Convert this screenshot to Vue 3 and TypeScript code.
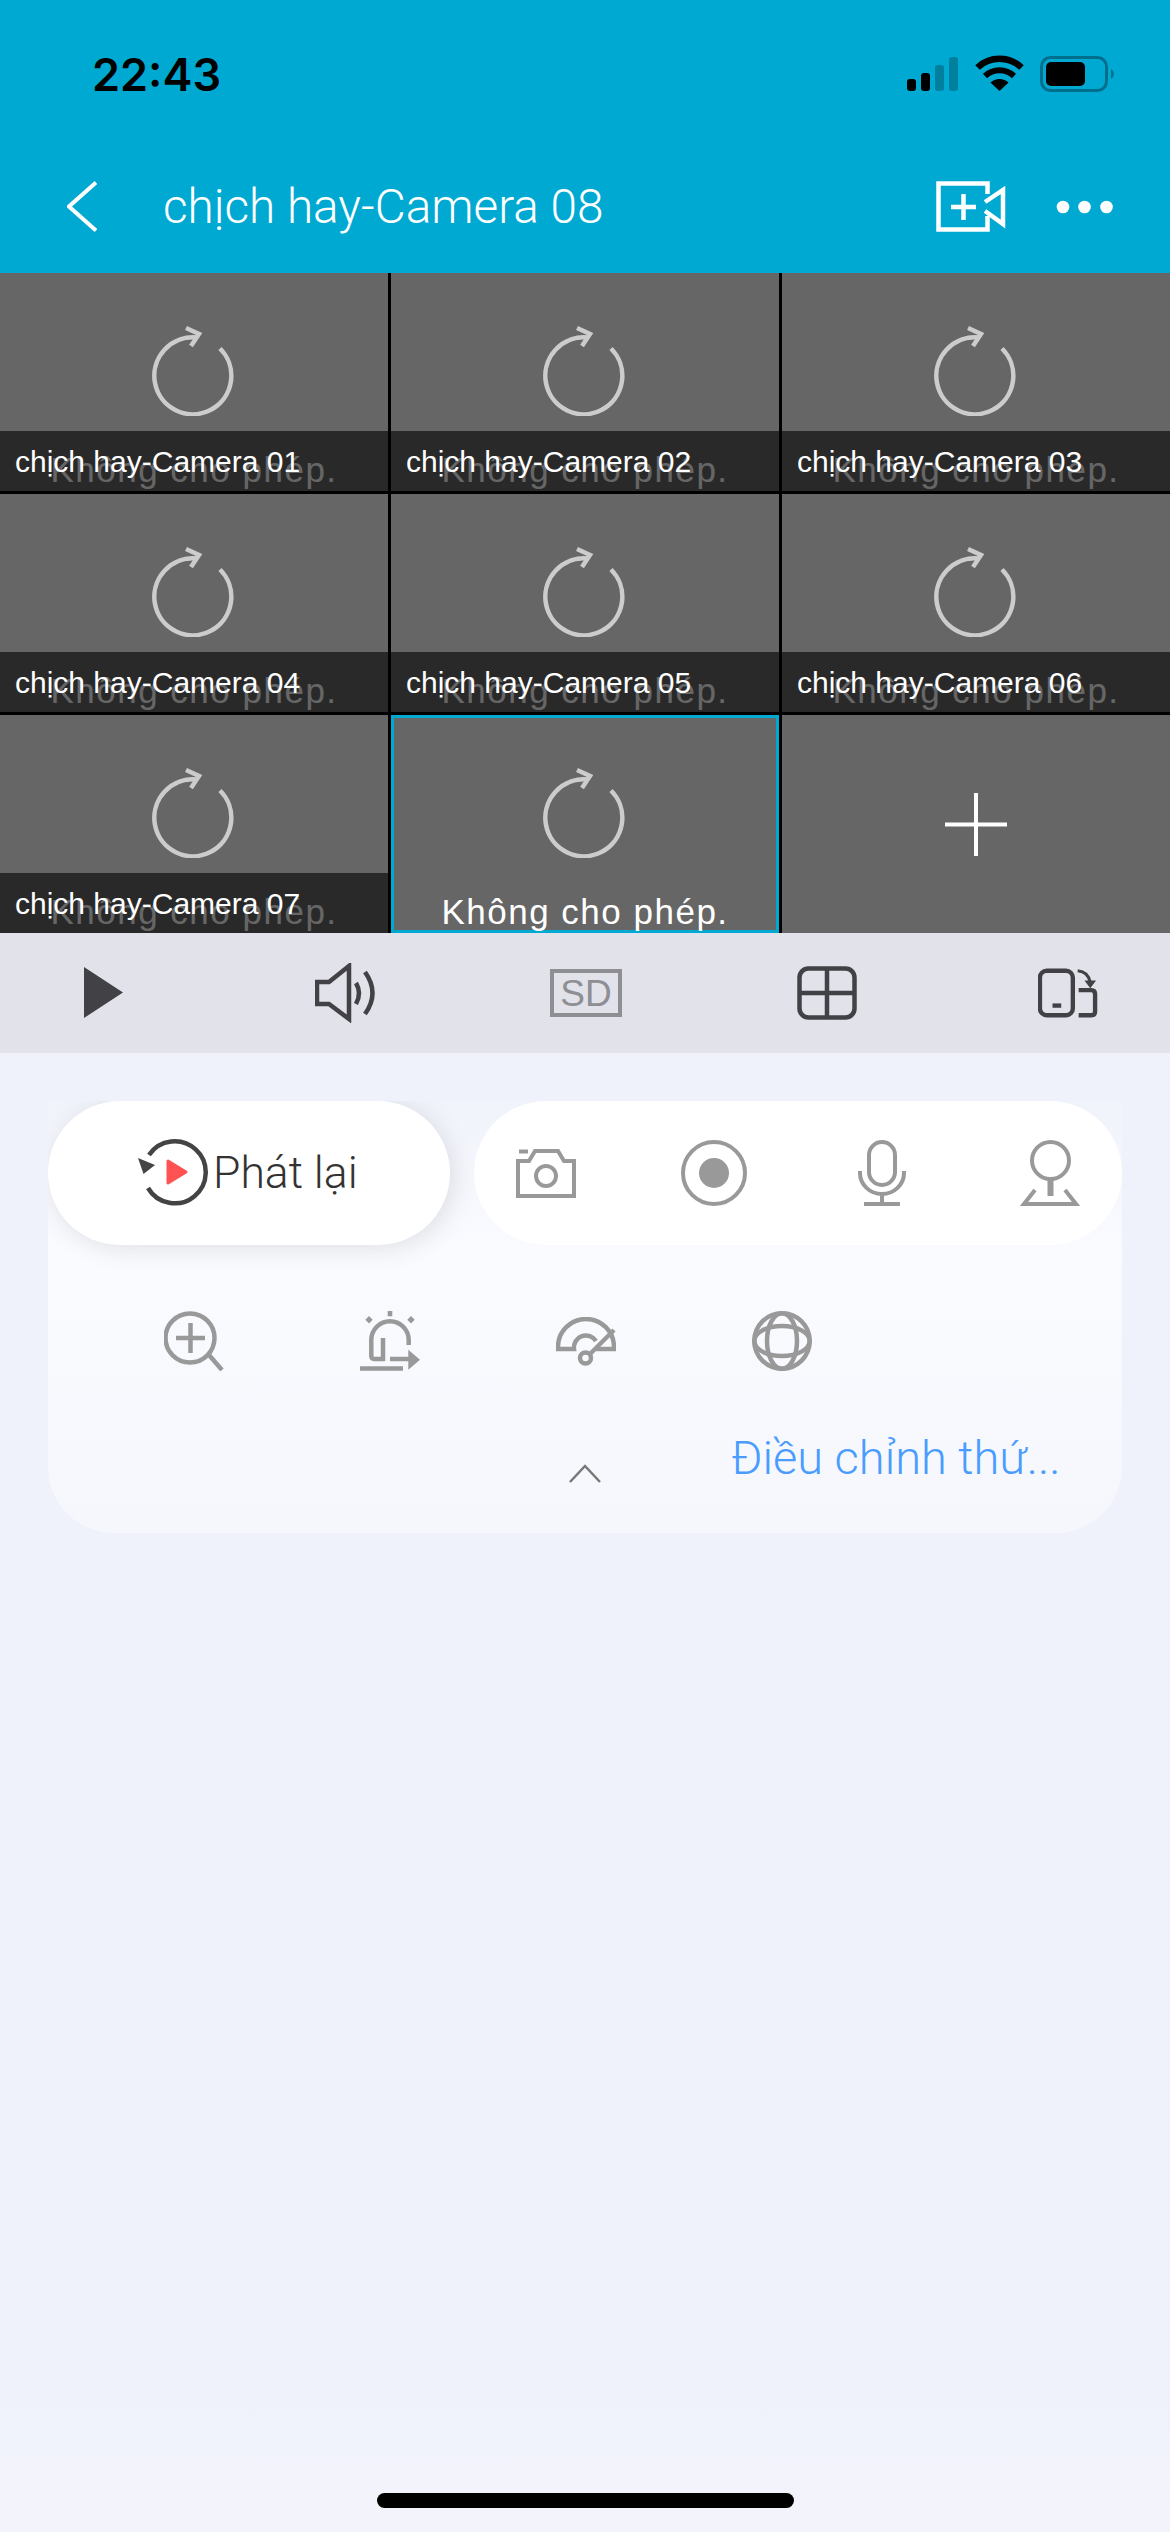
<script setup lang="ts">
const cells = [
  'chịch hay-Camera 01',
  'chịch hay-Camera 02',
  'chịch hay-Camera 03',
  'chịch hay-Camera 04',
  'chịch hay-Camera 05',
  'chịch hay-Camera 06',
  'chịch hay-Camera 07',
]
</script>

<template>
  <div class="page">
    <header class="top">
      <div class="status">
        <span class="time">22:43</span>
        <div class="status-icons">
          <svg class="ic-signal" width="51" height="34" viewBox="0 0 51 34">
            <rect x="0" y="22" width="9" height="12" rx="3" fill="#000" />
            <rect x="14" y="16" width="9" height="18" rx="3" fill="#000" />
            <rect x="28" y="8" width="9" height="26" rx="3" fill="#007f9f" />
            <rect x="42" y="0" width="9" height="34" rx="3" fill="#007f9f" />
          </svg>
          <svg class="ic-wifi" width="49" height="36" viewBox="0 0 49 36">
            <path d="M2.5 12.5A32 32 0 0 1 46.5 12.5" fill="none" stroke="#000" stroke-width="6.5" />
            <path d="M10 21A21 21 0 0 1 39 21" fill="none" stroke="#000" stroke-width="6" />
            <path d="M24.5 36L15.5 27.5A13 13 0 0 1 33.5 27.5Z" fill="#000" />
          </svg>
          <svg class="ic-battery" width="75" height="36" viewBox="0 0 75 36">
            <rect x="1.5" y="1.5" width="65" height="33" rx="9" fill="none" stroke="#006f8d" stroke-width="3" />
            <rect x="6" y="6" width="39" height="24" rx="5" fill="#000" />
            <path d="M71 13A6 6 0 0 1 71 23Z" fill="#006f8d" />
          </svg>
        </div>
      </div>
      <nav class="nav">
        <svg width="30" height="51" viewBox="0 0 30 51">
          <path d="M29 1.5L2 25.5L29 49.5" fill="none" stroke="#fff" stroke-width="4" />
        </svg>
        <span class="title">chịch hay-Camera 08</span>
        <svg class="ic-cam" width="70" height="51" viewBox="0 0 70 51">
          <g fill="none" stroke="#fff" stroke-width="4.5">
            <path d="M51.5 13V2.5H2.5V48.5H51.5V35" />
            <path d="M49 21L67 9V43L49 30" />
            <path d="M15 26H40M27.5 13V39" />
          </g>
        </svg>
        <svg class="ic-more" width="57" height="14" viewBox="0 0 57 14">
          <circle cx="7" cy="7" r="6.3" fill="#fff" />
          <circle cx="28.5" cy="7" r="6.3" fill="#fff" />
          <circle cx="50.5" cy="7" r="6.3" fill="#fff" />
        </svg>
      </nav>
    </header>

    <section class="grid">
      <div v-for="name in cells" :key="name" class="cell">
        <svg class="refresh" width="86" height="92" viewBox="0 0 86 92">
          <path d="M70 24.5A38.5 38.5 0 1 1 47 13.5" fill="none" stroke="#ccc" stroke-width="4.5" />
          <path d="M36 4L49 10L41 22" fill="none" stroke="#ccc" stroke-width="4.5" />
        </svg>
        <span class="msg">Không cho phép.</span>
        <div class="bar"><span>{{ name }}</span></div>
      </div>
      <div class="cell active">
        <svg class="refresh" width="86" height="92" viewBox="0 0 86 92">
          <path d="M70 24.5A38.5 38.5 0 1 1 47 13.5" fill="none" stroke="#ccc" stroke-width="4.5" />
          <path d="M36 4L49 10L41 22" fill="none" stroke="#ccc" stroke-width="4.5" />
        </svg>
        <span class="msg">Không cho phép.</span>
      </div>
      <div class="cell add">
        <svg width="62" height="63" viewBox="0 0 62 63">
          <path d="M0 31.5H62M31 0V63" fill="none" stroke="#fff" stroke-width="4" />
        </svg>
      </div>
    </section>

    <section class="toolbar">
      <div class="slot">
        <svg width="40" height="52" viewBox="0 0 40 52"><path d="M0 0L39 25.5L0 51Z" fill="#414146" /></svg>
      </div>
      <div class="slot">
        <svg width="60" height="60" viewBox="0 0 60 60">
          <g fill="none" stroke="#414146" stroke-width="4.5">
            <path d="M2 19H14L34 3V56L14 41H2Z" />
            <path d="M41 20Q47 30 41 41" />
            <path d="M50 9Q65 30 50 51" />
          </g>
        </svg>
      </div>
      <div class="slot">
        <span class="sd">SD</span>
      </div>
      <div class="slot">
        <svg width="60" height="54" viewBox="0 0 60 54">
          <g fill="none" stroke="#414146" stroke-width="4.5">
            <rect x="2.5" y="2.5" width="55" height="49" rx="9" />
            <path d="M2 27H58M30 2V52" />
          </g>
        </svg>
      </div>
      <div class="slot">
        <svg width="62" height="50" viewBox="0 0 62 50">
          <g fill="none" stroke="#414146" stroke-width="4.5">
            <rect x="2" y="2" width="34" height="46" rx="7" />
            <path d="M15 38H24" />
            <path d="M42 22H55Q59 22 59 26V44Q59 48 55 48H42" />
            <path d="M41 2Q52 3 54 14" stroke-width="3" />
          </g>
          <path d="M48 12H60L54 20Z" fill="#414146" />
        </svg>
      </div>
    </section>

    <section class="panel">
      <div class="pills">
        <div class="pill replay">
          <svg width="72" height="68" viewBox="0 0 72 68">
            <path d="M11 16A31 31 0 1 1 10 49" fill="none" stroke="#444" stroke-width="4.5" />
            <path d="M0 19L17 26L5.5 35Z" fill="#444" />
            <path d="M30 22L48 33L30 44Z" fill="#ff5252" stroke="#ff5252" stroke-width="3" stroke-linejoin="round" />
          </svg>
          <span>Phát lại</span>
        </div>
        <div class="pill actions">
          <div class="act">
            <svg width="60" height="49" viewBox="0 0 60 49">
              <g fill="none" stroke="#999" stroke-width="4">
                <path d="M2 12H13L19 2H42L48 12H58V47H2Z" />
                <path d="M3 2.5H12" />
                <circle cx="30" cy="27" r="10" />
              </g>
            </svg>
          </div>
          <div class="act">
            <svg width="66" height="66" viewBox="0 0 66 66">
              <circle cx="33" cy="33" r="31" fill="none" stroke="#999" stroke-width="4" />
              <circle cx="33" cy="33" r="15" fill="#999" />
            </svg>
          </div>
          <div class="act">
            <svg width="48" height="66" viewBox="0 0 48 66">
              <g fill="none" stroke="#999" stroke-width="4">
                <rect x="11" y="2" width="26" height="43" rx="13" />
                <path d="M2 31V33A22 21 0 0 0 46 33V31" />
                <path d="M24 54V64M6 64H42" />
              </g>
            </svg>
          </div>
          <div class="act">
            <svg width="60" height="66" viewBox="0 0 60 66">
              <g fill="none" stroke="#999" stroke-width="4">
                <circle cx="30.5" cy="20.5" r="18.5" />
                <path d="M30.5 40V56" stroke-width="6" />
                <path d="M15 50L4 64H56L45 50" />
              </g>
            </svg>
          </div>
        </div>
      </div>

      <div class="tools">
        <div class="tool">
          <svg width="60" height="60" viewBox="0 0 60 60">
            <g fill="none" stroke="#999" stroke-width="4.5">
              <circle cx="26" cy="27" r="24.5" />
              <path d="M12 27H41M26.5 12V42" />
              <path d="M45 44L58 59" />
            </g>
          </svg>
        </div>
        <div class="tool">
          <svg width="60" height="60" viewBox="0 0 60 60">
            <g fill="none" stroke="#999" stroke-width="4.5">
              <path d="M23 27V48H14Q11.3 48 11.3 45V29A18.7 18.7 0 0 1 48.7 29V34" />
              <path d="M30 48H49" />
              <path d="M0 57.5H43" />
            </g>
            <path d="M48.3 38.7L60 48.7L48.3 58.7Z" fill="#999" />
            <path d="M27.7 0H32.3V5.3H27.7ZM9 5L12.7 8.7L9 12.4L5.3 8.7ZM51 5L54.7 8.7L51 12.4L47.3 8.7Z" fill="#999" />
          </svg>
        </div>
        <div class="tool">
          <svg class="gauge" width="60" height="49" viewBox="0 0 60 49">
            <g fill="none" stroke="#999" stroke-width="4.5">
              <path d="M2 32V30A28 28 0 0 1 58 30V32" />
              <path d="M0 32H18A12 12 0 0 1 40 24" />
              <path d="M40 32H60" />
              <path d="M33 38L58 13" />
              <circle cx="29.5" cy="41" r="5.5" />
            </g>
          </svg>
        </div>
        <div class="tool">
          <svg width="60" height="60" viewBox="0 0 60 60">
            <g fill="none" stroke="#999" stroke-width="4.5">
              <circle cx="30" cy="30" r="27.7" />
              <ellipse cx="30" cy="30" rx="15" ry="27.7" />
              <ellipse cx="30" cy="30" rx="27.7" ry="15" />
            </g>
          </svg>
        </div>
      </div>

      <div class="foot">
        <svg class="chev" width="32" height="19" viewBox="0 0 32 19">
          <path d="M1 18L16 2L31 18" fill="none" stroke="#777" stroke-width="2.5" />
        </svg>
        <span class="link">Điều chỉnh thứ...</span>
      </div>
    </section>

    <div class="home"></div>
  </div>
</template>

<style scoped>
.page {
  position: relative;
  width: 1170px;
  height: 2532px;
  overflow: hidden;
  display: flex;
  flex-direction: column;
  font-family: "Liberation Sans", Arial, sans-serif;
  background: linear-gradient(#eff2fb 94%, #f3f3fb);
}

.top {
  height: 273px;
  flex: none;
  background: #00a9d2;
}

.status {
  height: 181px;
  box-sizing: border-box;
  padding: 55px 55px 0 92px;
  display: flex;
  justify-content: space-between;
  align-items: flex-start;
}

.time {
  font-family: Inter, sans-serif;
  font-size: 45px;
  font-weight: 600;
  line-height: 40px;
  color: #000;
}

.status-icons {
  display: flex;
  align-items: flex-start;
}

.ic-signal {
  margin-top: 2px;
}

.ic-wifi {
  margin-left: 17px;
}

.ic-battery {
  margin-left: 16px;
  margin-top: 1px;
}

.nav {
  height: 51px;
  padding-left: 67px;
  display: flex;
  align-items: center;
}

.title {
  margin-left: 66px;
  width: 773px;
  font-family: Roboto, sans-serif;
  font-size: 47.7px;
  font-weight: 300;
  color: #fff;
  white-space: nowrap;
}

.ic-more {
  margin-left: 50px;
}

.grid {
  height: 660px;
  flex: none;
  display: grid;
  grid-template-columns: repeat(3, 388px);
  grid-template-rows: repeat(3, 218px);
  gap: 3px;
  background: #000;
}

.cell {
  position: relative;
  overflow: hidden;
  background: #666;
}

.refresh {
  display: block;
  margin: 51px auto 0;
  transform: translateX(-1px);
}

.msg {
  position: absolute;
  left: 0;
  right: 0;
  bottom: 1px;
  text-align: center;
  font-size: 35px;
  line-height: 40px;
  letter-spacing: 1.5px;
  color: #fff;
  white-space: nowrap;
}

.bar {
  position: absolute;
  left: 0;
  right: 0;
  bottom: 0;
  height: 60px;
  box-sizing: border-box;
  padding: 14px 0 0 15px;
  background: rgba(0, 0, 0, 0.6);
  font-size: 30px;
  line-height: 34px;
  color: #fff;
  white-space: nowrap;
}

.active {
  box-shadow: inset 0 0 0 3px #00a9d2;
}

.add {
  display: flex;
  align-items: center;
  justify-content: center;
}

.toolbar {
  height: 120px;
  flex: none;
  box-sizing: border-box;
  padding-left: 74px;
  display: flex;
  gap: 181px;
  align-items: center;
  background: #e1e2ea;
}

.slot {
  width: 60px;
  display: flex;
  justify-content: center;
}

.sd {
  flex: none;
  width: 72px;
  height: 48px;
  box-sizing: border-box;
  border: 4px solid #8e8e93;
  font-size: 37px;
  line-height: 41px;
  text-align: center;
  color: #8e8e93;
}

.panel {
  margin: 48px 48px 0;
  height: 432px;
  box-sizing: border-box;
  border-radius: 0 0 66px 66px;
  background: linear-gradient(#f1f3fb, #fafbff 35%, #f5f7fc);
}

.pills {
  height: 168px;
  overflow: hidden;
  display: flex;
  align-items: flex-start;
  gap: 24px;
}

.pill {
  height: 144px;
  border-radius: 72px;
  background: #fff;
  display: flex;
  align-items: center;
  box-sizing: border-box;
}

.replay {
  position: relative;
  width: 402px;
  padding-left: 90px;
  gap: 3px;
  font-family: Roboto, sans-serif;
  font-size: 44.5px;
  font-weight: 300;
  color: #333;
  box-shadow: 4px 4px 26px rgba(0, 0, 0, 0.1);
}

.actions {
  flex: 1;
  padding-left: 39px;
  gap: 102px;
}

.act {
  width: 66px;
  display: flex;
  justify-content: center;
}

.tools {
  margin-top: 42px;
  padding-left: 116px;
  display: flex;
  gap: 136px;
}

.tool {
  width: 60px;
  height: 60px;
}

.tool svg {
  display: block;
}

.gauge {
  margin-top: 6px;
}

.foot {
  margin-top: 40px;
  padding-left: 521px;
  display: flex;
  align-items: flex-start;
}

.chev {
  flex: none;
  margin-top: 53px;
}

.link {
  margin-left: 130px;
  margin-top: 22px;
  font-family: Roboto, sans-serif;
  font-size: 47px;
  font-weight: 300;
  line-height: 50px;
  color: #4a9cff;
  white-space: nowrap;
}

.home {
  position: absolute;
  left: 377px;
  top: 2493px;
  width: 417px;
  height: 15px;
  border-radius: 8px;
  background: #000;
}
</style>
